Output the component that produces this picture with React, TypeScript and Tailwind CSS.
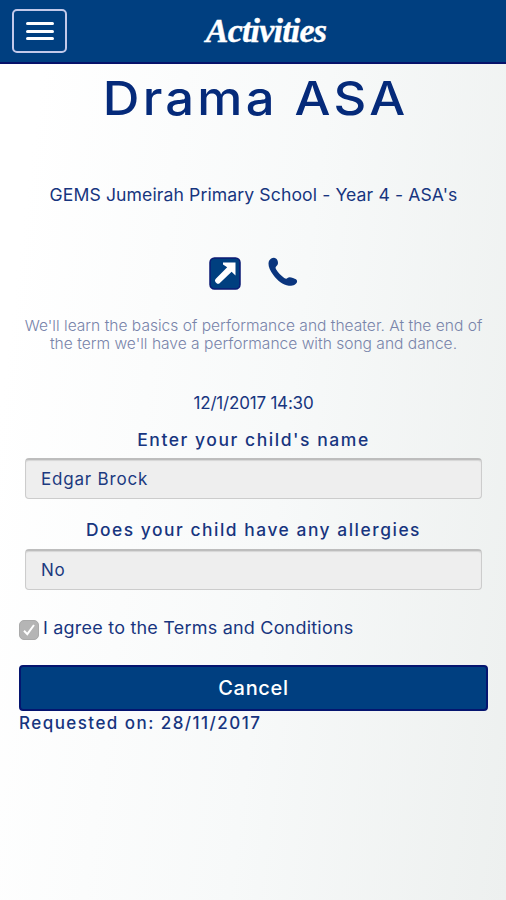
import { useState } from "react";
import type { ReactNode } from "react";

function MenuButton() {
  return (
    <button
      aria-label="Open menu"
      className="flex h-[44px] w-[55px] flex-col items-center justify-center gap-[4.5px] rounded-[5px] border-2 border-[#c3c9ea]"
    >
      <span className="h-[3px] w-[28px] rounded-full bg-white" />
      <span className="h-[3px] w-[28px] rounded-full bg-white" />
      <span className="h-[3px] w-[28px] rounded-full bg-white" />
    </button>
  );
}

function ExternalLinkIcon() {
  return (
    <svg width="32" height="33" viewBox="0 0 32 33">
      <rect x="1" y="1" width="30" height="31" rx="4.5" fill="#003f7f" stroke="#0b1a74" strokeWidth="1.5" />
      <path
        d="M14 5.5H26.5V18.5L22.6 14.8L10.6 26.2Q9 27.6 7.4 26L6.4 25Q5.2 23.4 6.8 21.8L18.2 10.2L14 7.6Z"
        fill="#fff"
      />
    </svg>
  );
}

function PhoneIcon() {
  return (
    <svg width="30" height="30" viewBox="0 0 30 30">
      <path
        d="M3.2 1.6C5.6 0 8.4 .7 9.5 3.4C10.3 5.6 10.3 7.6 8.3 9.3C7.3 10.2 7.4 11.2 8.2 12.6C10 15.8 13 18.8 16.2 20.9C17.7 21.9 18.6 21.9 19.5 21.1C20.9 19.8 22.6 20.2 25 21.1C27.4 22 29.3 22.6 29.1 24.5C28.8 27.4 24.5 29.2 20.8 28.8C14.8 28.1 9.5 23.8 5.5 18.3C2.2 13.7 .4 9.8 .5 6.4C.6 4.2 1.5 2.7 3.2 1.6Z"
        fill="#0a357e"
      />
    </svg>
  );
}

function Field({ label, value, children }: { label: string; value: string; children: ReactNode }) {
  return (
    <label className="flex flex-col">
      {children}
      <input
        readOnly
        aria-label={label}
        value={value}
        className="h-[41px] rounded-[4px] border border-t-2 border-[#ccc] border-t-[#bdbdbd] bg-[#eee] px-[15px] text-[17px] tracking-[0.8px] text-[#1c3a80] shadow-[inset_0_1px_1px_rgba(0,0,0,0.1)] outline-none"
      />
    </label>
  );
}

export default function App() {
  const [agreed, setAgreed] = useState(true);

  return (
    <div className="flex h-[900px] w-[506px] flex-col overflow-hidden bg-[linear-gradient(97deg,#ffffff_8%,#f7f9f9_55%,#edf0ef_100%)] font-['Inter',sans-serif] text-[#17357f]">
      <header className="grid h-[64px] shrink-0 grid-cols-[1fr_auto_1fr] items-center border-b-2 border-[#06126a] bg-[#003f80] pl-[12px]">
        <MenuButton />
        <h1 className="mr-[-14px] font-['Liberation_Serif',serif] text-[34px] leading-[62px] font-bold tracking-[-0.8px] text-white italic [-webkit-text-stroke:0.4px_#fff]">
          Activities
        </h1>
      </header>

      <main className="flex flex-col pr-[18px] pl-[19px]">
        <h2 className="mt-[4px] scale-x-[1.08] pl-[4px] text-center text-[47px] leading-[60px] font-medium tracking-[3px] whitespace-nowrap text-[#052a7a]">
          Drama ASA
        </h2>
        <p className="mt-[57px] scale-x-[1.035] text-center text-[17px] leading-[20px] tracking-[0.1px] whitespace-nowrap">
          GEMS Jumeirah Primary School - Year 4 - ASA's
        </p>

        <div className="mt-[52px] flex h-[33px] justify-center gap-[27px]">
          <a href="#link" aria-label="Open link">
            <ExternalLinkIcon />
          </a>
          <a href="#call" aria-label="Call">
            <PhoneIcon />
          </a>
        </div>

        <p className="mt-[26.5px] scale-x-[1.038] text-center text-[15px] leading-[18.5px] font-light whitespace-nowrap text-[#7884aa]">
          We'll learn the basics of performance and theater. At the end of
          <br />
          the term we'll have a performance with song and dance.
        </p>
        <p className="mt-[39.5px] text-center text-[17px] leading-[20px] tracking-[-0.2px]">12/1/2017 14:30</p>

        <div className="flex flex-col px-[6px]">
          <Field label="Child's name" value="Edgar Brock">
            <span className="mt-[17px] mb-[8px] scale-x-[1.03] text-center text-[17px] leading-[20px] font-medium tracking-[1.5px]">
              Enter your child's name
            </span>
          </Field>
          <Field label="Allergies" value="No">
            <span className="mt-[21px] mb-[9px] scale-x-[1.022] text-center text-[17px] leading-[20px] font-medium tracking-[1.5px]">
              Does your child have any allergies
            </span>
          </Field>
        </div>

        <div className="mt-[28px] flex h-[22px] gap-[4px]">
          <button
            role="checkbox"
            aria-checked={agreed}
            onClick={() => setAgreed(!agreed)}
            className="mt-[2px] flex h-[20px] w-[20px] items-center justify-center rounded-[5px] border border-[#aaa] bg-[#b5b5b5]"
          >
            {agreed && (
              <svg width="16" height="16" viewBox="0 0 16 16" fill="none" stroke="#fff" strokeWidth="2">
                <path d="M3 8.8L6.3 12.2L13 3" />
              </svg>
            )}
          </button>
          <span className="origin-left scale-x-[1.058] text-[17px] leading-[20px] tracking-[0.2px] whitespace-nowrap">
            I agree to the Terms and Conditions
          </span>
        </div>

        <button className="mt-[25px] h-[46px] rounded-[4px] border-2 border-[#05156f] bg-[#003f80] text-[20px] font-medium tracking-[0.7px] text-white">
          Cancel
        </button>
        <p className="mt-[2px] text-[17px] leading-[20px] font-medium tracking-[1.45px] whitespace-nowrap">
          Requested on: 28/11/2017
        </p>
      </main>
    </div>
  );
}
